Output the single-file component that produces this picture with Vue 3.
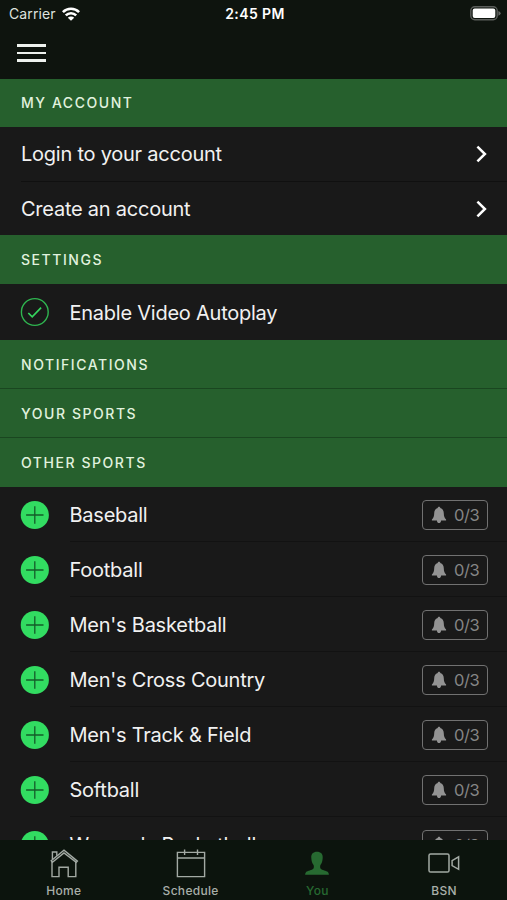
<template>
  <div class="screen">
    <header class="top">
      <div class="status">
        <div class="status__carrier">
          <span>Carrier</span>
          <svg class="status__wifi" width="18" height="14" viewBox="0 0 18 14" aria-hidden="true">
            <g fill="none" stroke="#fff" stroke-width="2.6">
              <path d="M0.9 5.1 A11.5 11.5 0 0 1 17.1 5.1" />
              <path d="M3.8 8.4 A7.4 7.4 0 0 1 14.2 8.4" />
            </g>
            <path d="M9 13.8 L5.8 10.8 A4.6 4.6 0 0 1 12.2 10.8 Z" fill="#fff" />
          </svg>
        </div>
        <span class="status__time">2:45 PM</span>
        <svg class="status__battery" width="31" height="15" viewBox="0 0 31 15" aria-hidden="true">
          <rect x="0.8" y="0.8" width="26.4" height="13" rx="4" fill="none" stroke="#5b5e5b" stroke-width="1.4" />
          <rect x="2.7" y="2.6" width="22.6" height="9.4" rx="2" fill="#fff" />
          <path d="M28.4 5 Q30.6 5.8 30.6 7.3 Q30.6 8.9 28.4 9.7 Z" fill="#666966" />
        </svg>
      </div>
      <button class="menu" aria-label="Menu">
        <span></span>
        <span></span>
        <span></span>
      </button>
    </header>

    <main class="content">
      <h2 class="section section--first">MY ACCOUNT</h2>
      <div v-for="label in accountLinks" :key="label" class="link">
        <span class="label">{{ label }}</span>
        <svg width="12" height="18" viewBox="0 0 12 18" aria-hidden="true">
          <path d="M1.4 1.7 L8.9 9 L1.4 16.3" fill="none" stroke="#fff" stroke-width="2.5" />
        </svg>
      </div>

      <h2 class="section section--settings">SETTINGS</h2>
      <div class="row row--setting">
        <svg class="row__icon" width="30" height="30" viewBox="0 0 30 30" aria-hidden="true">
          <circle cx="14.8" cy="15" r="13.4" fill="none" stroke="#2fb550" stroke-width="1.4" />
          <path d="M8.3 16 L12.2 19.8 L21.1 10.7" fill="none" stroke="#35d55e" stroke-width="1.7" />
        </svg>
        <div class="row__body">
          <span class="label">Enable Video Autoplay</span>
        </div>
      </div>

      <h2 class="section section--ruled">NOTIFICATIONS</h2>
      <h2 class="section section--ruled">YOUR SPORTS</h2>
      <h2 class="section">OTHER SPORTS</h2>

      <div v-for="sport in sports" :key="sport" class="row">
        <svg class="row__icon" width="30" height="30" viewBox="0 0 30 30" aria-hidden="true">
          <circle cx="14.8" cy="15" r="14.1" fill="#32dc61" />
          <path d="M14.8 6.3 V23.7 M6.1 15 H23.5" fill="none" stroke="#145c29" stroke-width="1.3" />
        </svg>
        <div class="row__body">
          <span class="label">{{ sport }}</span>
          <span class="alerts">
            <svg width="16" height="18" viewBox="0 0 16 18" aria-hidden="true">
              <path
                d="M8 0.8 C8.9 0.8 9.3 1.4 9.3 2.1 C11.8 2.8 12.7 4.8 12.8 7.3 C12.9 10.3 13.3 11.9 15.1 13.4 V14.4 H0.9 V13.4 C2.7 11.9 3.1 10.3 3.2 7.3 C3.3 4.8 4.2 2.8 6.7 2.1 C6.7 1.4 7.1 0.8 8 0.8 Z M5.9 14.4 H10.1 C9.9 16.2 9.1 17.1 8 17.1 C6.9 17.1 6.1 16.2 5.9 14.4 Z"
                fill="#939393"
              />
            </svg>
            <span>0/3</span>
          </span>
        </div>
      </div>
    </main>

    <nav class="tabs">
      <a class="tab">
        <svg width="34" height="32" viewBox="0 0 34 32" aria-hidden="true">
          <g fill="none" stroke="#a3aaa4" stroke-width="1.4">
            <path d="M5 13.5 V28.6 H12 V19.2 H21.2 V28.6 H28.8 V13.5" />
            <path d="M4.2 12.7 L17 2.2 L30.4 13.1 L29.2 14.4 L17 4.9 L5.4 14.2 Z" />
            <path d="M5.4 11.4 V4 H9.8 V7.8" />
          </g>
        </svg>
        <span>Home</span>
      </a>
      <a class="tab">
        <svg width="34" height="32" viewBox="0 0 34 32" aria-hidden="true">
          <g fill="none" stroke="#a3aaa4" stroke-width="1.4">
            <path d="M3.4 4.4 H30.6 V28.6 H3.4 Z M3.4 10 H30.6" />
            <path d="M10.6 1.6 V7 M23.5 1.6 V7" />
          </g>
        </svg>
        <span>Schedule</span>
      </a>
      <a class="tab tab--active">
        <svg width="34" height="32" viewBox="0 0 34 32" aria-hidden="true">
          <path
            d="M17 3.8 C20.8 3.8 23 6 22.7 10 C22.5 13.4 21.7 15.4 20.4 17 C20 18.4 20 19.7 20.7 20.7 C22 22.2 26.4 22.5 27.9 24.1 C28.6 24.9 28.8 25.8 28.9 26.8 H5.1 C5.2 25.8 5.4 24.9 6.1 24.1 C7.6 22.5 12 22.2 13.3 20.7 C14 19.7 14 18.4 13.6 17 C12.3 15.4 11.5 13.4 11.3 10 C11 6 13.2 3.8 17 3.8 Z"
            fill="#276a31"
          />
        </svg>
        <span>You</span>
      </a>
      <a class="tab">
        <svg width="34" height="32" viewBox="0 0 34 32" aria-hidden="true">
          <g fill="none" stroke="#a3aaa4" stroke-width="1.5">
            <rect x="2" y="6" width="20" height="18" rx="1.6" />
            <path d="M25.1 12.6 L31.6 8.9 V21.3 L25.1 17.6 Z" />
          </g>
        </svg>
        <span>BSN</span>
      </a>
    </nav>
  </div>
</template>

<script setup>
const accountLinks = ['Login to your account', 'Create an account']

const sports = [
  'Baseball',
  'Football',
  "Men's Basketball",
  "Men's Cross Country",
  "Men's Track & Field",
  'Softball',
  "Women's Basketball"
]
</script>

<style>
body {
  margin: 0;
  background: #191919;
}
</style>

<style scoped>
.screen {
  width: 507px;
  height: 900px;
  display: flex;
  flex-direction: column;
  overflow: hidden;
  background: #191919;
  color: #f1f1f1;
  font-family: Inter, Roboto, sans-serif;
}

.top {
  height: 79px;
  flex: none;
  background: #0e140e;
}

.status {
  height: 27px;
  display: grid;
  grid-template-columns: 1fr auto 1fr;
  align-items: center;
  padding: 0 6px 0 9px;
  font-size: 14px;
  line-height: 27px;
  color: #dfe2df;
}

.status__carrier {
  display: flex;
  align-items: center;
  gap: 6px;
  letter-spacing: 0.1px;
}

.status__time {
  color: #fff;
  font-weight: 600;
  letter-spacing: 0.4px;
}

.status__battery {
  justify-self: end;
}

.menu {
  display: flex;
  flex-direction: column;
  gap: 5px;
  margin: 17px 0 0 17px;
  padding: 0;
  border: 0;
  background: none;
}

.menu span {
  width: 29px;
  height: 2.5px;
  background: #eef2ee;
}

.content {
  flex: 1;
  min-height: 0;
  overflow: hidden;
}

.section {
  box-sizing: border-box;
  height: 49px;
  margin: 0;
  padding-left: 21px;
  background: #26602d;
  color: #e1f2df;
  font-size: 14px;
  font-weight: 500;
  line-height: 50px;
  letter-spacing: 1.55px;
}

.section--first {
  height: 48px;
  line-height: 48px;
}

.section--settings {
  line-height: 49px;
}

.section--ruled {
  border-bottom: 1px solid #1a4620;
}

.link {
  box-sizing: border-box;
  height: 54px;
  margin-left: 21px;
  padding-right: 19px;
  display: flex;
  align-items: center;
  justify-content: space-between;
}

.link + .link {
  border-top: 1px solid #101010;
}

.label {
  font-size: 20px;
  line-height: 28px;
  letter-spacing: -0.24px;
  white-space: nowrap;
}

.row {
  height: 55px;
  padding-left: 20px;
  display: flex;
  align-items: center;
  gap: 19.5px;
}

.row__icon {
  flex: none;
}

.row__body {
  box-sizing: border-box;
  flex: 1;
  height: 55px;
  padding: 2px 19px 0 0;
  display: flex;
  align-items: center;
  justify-content: space-between;
  border-bottom: 1px solid #121212;
}

.row--setting,
.row--setting .row__body {
  height: 56px;
  border: 0;
}

.alerts {
  box-sizing: border-box;
  width: 66px;
  height: 30px;
  display: flex;
  align-items: center;
  gap: 7px;
  padding-left: 8px;
  border: 1.5px solid #717171;
  border-radius: 4px;
  color: #858585;
  font-size: 16.5px;
  letter-spacing: -0.4px;
}

.tabs {
  height: 60px;
  flex: none;
  display: grid;
  grid-template-columns: repeat(4, 1fr);
  background: #0c140d;
}

.tab {
  display: flex;
  flex-direction: column;
  align-items: center;
  padding: 8px 0 0 1px;
  color: #a9afa9;
  font-size: 12px;
  font-weight: 500;
  line-height: 22px;
  letter-spacing: 0.3px;
}

.tab--active {
  color: #276a31;
}
</style>
